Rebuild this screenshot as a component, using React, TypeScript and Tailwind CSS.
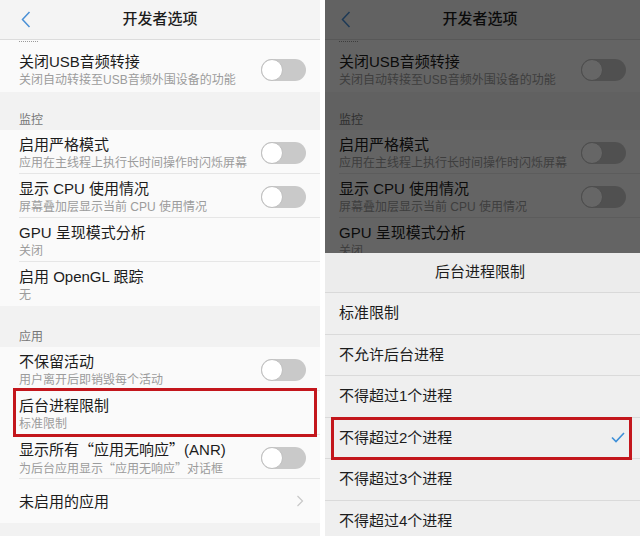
import React from 'react';

const FONT = { fontFamily: '"Liberation Sans", "Noto Sans CJK SC", "Noto Sans", sans-serif' };
const CJK = { fontFamily: '"Noto Sans CJK SC", sans-serif' };

function Toggle() {
  return (
    <div className="w-[45px] h-[22px] rounded-full bg-[#c9c9c9] flex items-center shrink-0">
      <div className="w-[22px] h-[22px] rounded-full bg-white border border-[#bfbfbf]" />
    </div>
  );
}

function Chevron() {
  return (
    <svg width="8" height="12" viewBox="0 0 8 12" className="mr-[2px] shrink-0">
      <path d="M1.5 1 L6.5 6 L1.5 11" fill="none" stroke="#c8c8c8" strokeWidth="1.2" />
    </svg>
  );
}

interface RowProps {
  title: React.ReactNode;
  sub?: React.ReactNode;
  toggle?: boolean;
  chevron?: boolean;
  last?: boolean;
  tall?: boolean;
}

function Row({ title, sub, toggle, chevron, last, tall }: RowProps) {
  return (
    <div className="bg-[#fafafa] pl-[19px]">
      <div
        className={`flex items-center pr-[14px] ${tall ? 'h-[46px]' : 'h-[44px]'} ${sub ? 'pt-[2px]' : ''} ${
          last ? '' : 'border-b border-[#e6e6e6]'
        }`}
      >
        <div className="flex-1 flex flex-col">
          <div className="text-[15px] leading-[19px] text-[#1c1c1c]">{title}</div>
          {sub && <div className="text-[12px] leading-[16px] mt-[1px] text-[#9c9c9c]">{sub}</div>}
        </div>
        {toggle && <Toggle />}
        {chevron && <Chevron />}
      </div>
    </div>
  );
}

function Section({ label, h }: { label: string; h: string }) {
  return (
    <div className={`${h} bg-[#f2f2f2] flex items-end pl-[19px] pb-[2px]`}>
      <span className="text-[12px] leading-[16px] text-[#777]">{label}</span>
    </div>
  );
}

// fullwidth quotes as in the phone font
const Q = ({ c }: { c: string }) => <span style={CJK}>{c}</span>;

// one phone screen, 320 wide
function Screen({ cut }: { cut?: boolean }) {
  return (
    <div className="w-[320px] h-[536px] bg-[#f2f2f2] flex flex-col">
      {/* Header */}
      <div className="h-[40px] shrink-0 bg-[#f4f4f4] border-b border-[#dcdcdc] grid grid-cols-[60px_1fr_60px] items-center">
        <div className="pl-[21px] flex items-center">
          <svg width="10" height="17" viewBox="0 0 10 17">
            <path d="M8.5 1 L1.5 8.5 L8.5 16" fill="none" stroke="#4a90d6" strokeWidth="1.5" />
          </svg>
        </div>
        <div className="text-center text-[15px] font-medium text-[#1c1c1c]">开发者选项</div>
        <div />
      </div>

      {/* cut-off item above */}
      <div className="h-[6px] bg-[#fafafa] pl-[19px]">
        <div className="w-[19px] border-t border-dotted border-[#9a9a9a] mt-[1px]" />
      </div>
      <Row title="关闭USB音频转接" sub="关闭自动转接至USB音频外围设备的功能" toggle last tall />

      <Section label="监控" h="h-[38px]" />
      <Row title="启用严格模式" sub="应用在主线程上执行长时间操作时闪烁屏幕" toggle />
      <Row title="显示 CPU 使用情况" sub="屏幕叠加层显示当前 CPU 使用情况" toggle />
      <Row title="GPU 呈现模式分析" sub="关闭" />
      {!cut && (
        <>
          <Row title="启用 OpenGL 跟踪" sub="无" last />

          <Section label="应用" h="h-[41px]" />
          <Row title="不保留活动" sub="用户离开后即销毁每个活动" toggle />
          <Row title="后台进程限制" sub="标准限制" />
          <Row
            title={
              <>
                显示所有<Q c="“" />应用无响应<Q c="”" />(ANR)
              </>
            }
            sub={
              <>
                为后台应用显示<Q c="“" />应用无响应<Q c="”" />对话框
              </>
            }
            toggle
          />
          <Row title="未启用的应用" chevron last />
        </>
      )}
    </div>
  );
}

const options = ['标准限制', '不允许后台进程', '不得超过1个进程', '不得超过2个进程', '不得超过3个进程', '不得超过4个进程'];

export default function App() {
  return (
    <div className="w-[640px] h-[536px] bg-white flex overflow-hidden" style={FONT}>
      {/* Left: settings list */}
      <div className="relative w-[320px] shrink-0">
        <Screen />
        <div className="absolute left-[13px] top-[388px] w-[304px] h-[49px] border-[3px] border-[#c3161c]" />
      </div>

      <div className="w-[5px] shrink-0 bg-white" />

      {/* Right: dimmed list with bottom sheet */}
      <div className="w-[315px] shrink-0 overflow-hidden">
        <div className="relative w-[320px] ml-[-5px]">
          <Screen cut />
          <div className="absolute inset-0 bg-black/60" />

          <div className="absolute left-0 right-0 top-[253px] bottom-0 bg-[#efefef]">
            <div className="h-[40px] flex items-center justify-center bg-[#ececec] border-b border-[#d9d9d9] text-[15px] text-[#1c1c1c]">
              后台进程限制
            </div>
            {options.map((o, i) => (
              <div
                key={o}
                className="h-[41.5px] flex items-center pl-[19px] pr-[15px] border-b border-[#dadada] text-[15px] text-[#1c1c1c]"
              >
                <span className="flex-1">{o}</span>
                {i === 3 && (
                  <svg width="14" height="11" viewBox="0 0 14 11">
                    <path d="M1 5.5 L5 9.5 L13 1" fill="none" stroke="#3d8fd8" strokeWidth="1.6" />
                  </svg>
                )}
              </div>
            ))}
          </div>

          <div className="absolute left-[11px] top-[417px] w-[301px] h-[43px] border-[3px] border-[#c3161c]" />
        </div>
      </div>
    </div>
  );
}
